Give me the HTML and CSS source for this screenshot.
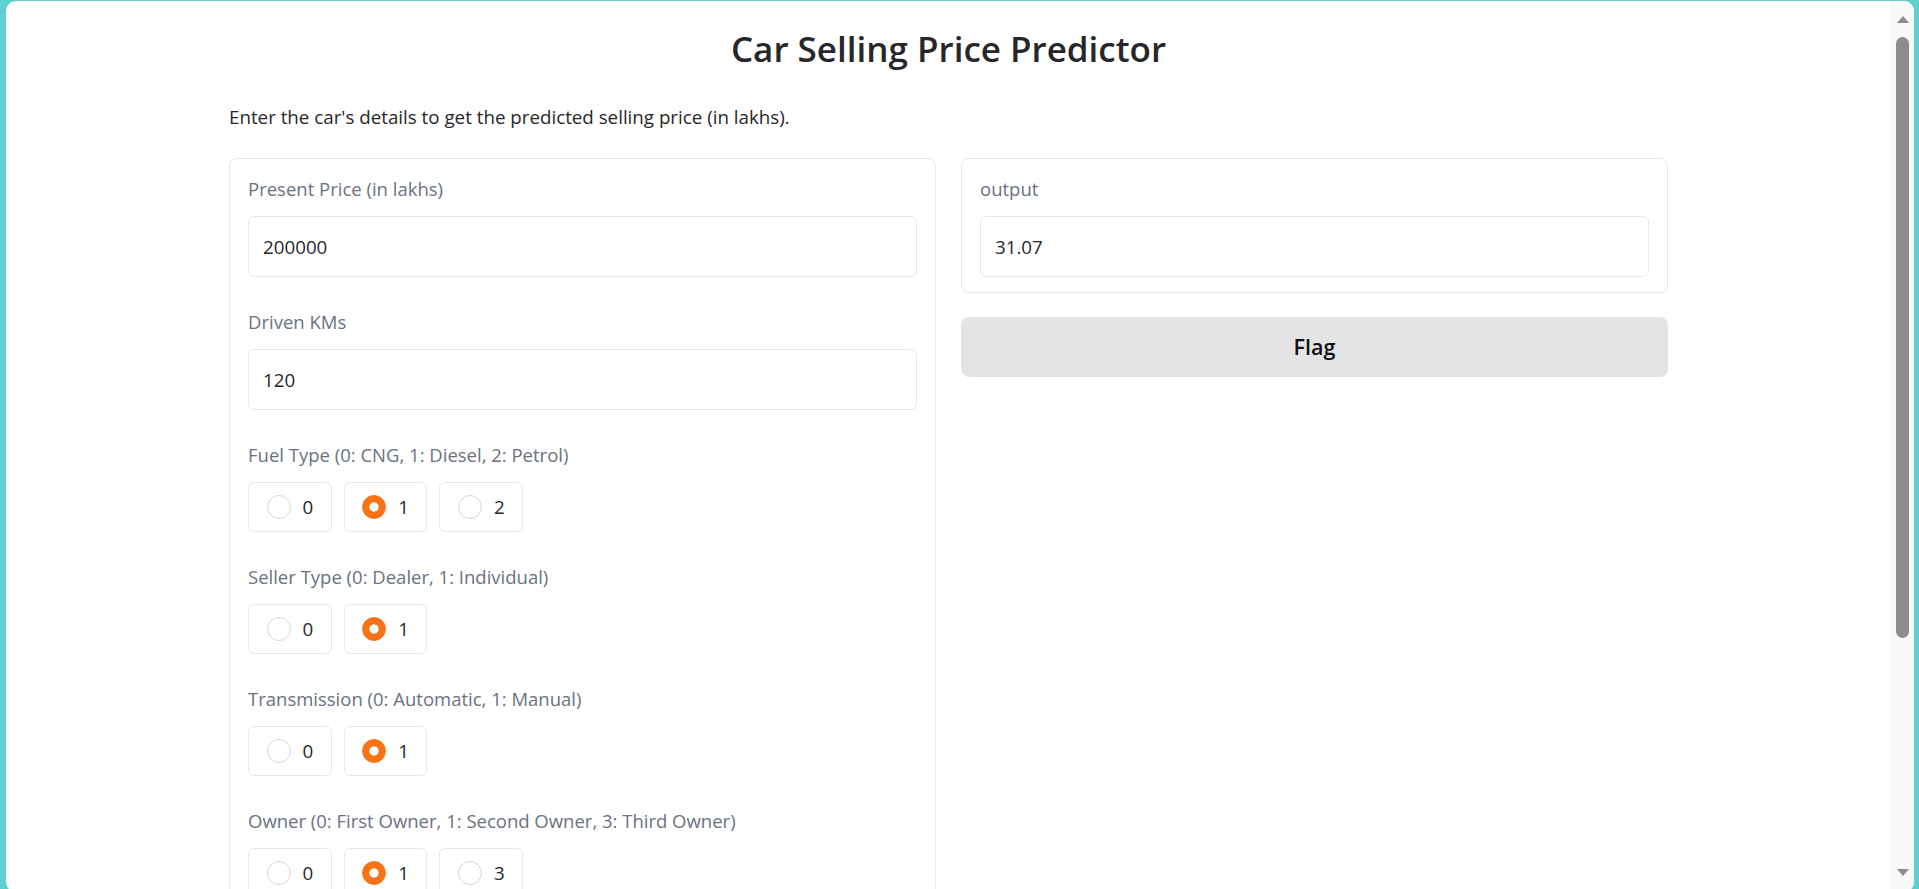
FILE: index.html
```html
<!DOCTYPE html>
<html lang="en">
<head>
<meta charset="utf-8">
<title>Car Selling Price Predictor</title>
<link rel="stylesheet" href="styles.css">
</head>
<body>
<div class="window">
  <main class="main">
    <div class="container">
      <h1 class="title">Car Selling Price Predictor</h1>
      <p class="desc">Enter the car's details to get the predicted selling price (in lakhs).</p>
      <div class="columns">
        <section class="card form">
          <div class="field">
            <label class="label" for="price">Present Price (in lakhs)</label>
            <input class="input" id="price" type="text" value="200000" readonly>
          </div>
          <div class="field">
            <label class="label" for="kms">Driven KMs</label>
            <input class="input" id="kms" type="text" value="120" readonly>
          </div>
          <div class="field">
            <span class="label">Fuel Type (0: CNG, 1: Diesel, 2: Petrol)</span>
            <div class="radios">
              <label class="radio"><input type="radio" name="fuel"><span>0</span></label>
              <label class="radio"><input type="radio" name="fuel" checked><span>1</span></label>
              <label class="radio"><input type="radio" name="fuel"><span>2</span></label>
            </div>
          </div>
          <div class="field">
            <span class="label">Seller Type (0: Dealer, 1: Individual)</span>
            <div class="radios">
              <label class="radio"><input type="radio" name="seller"><span>0</span></label>
              <label class="radio"><input type="radio" name="seller" checked><span>1</span></label>
            </div>
          </div>
          <div class="field">
            <span class="label">Transmission (0: Automatic, 1: Manual)</span>
            <div class="radios">
              <label class="radio"><input type="radio" name="trans"><span>0</span></label>
              <label class="radio"><input type="radio" name="trans" checked><span>1</span></label>
            </div>
          </div>
          <div class="field">
            <span class="label">Owner (0: First Owner, 1: Second Owner, 3: Third Owner)</span>
            <div class="radios">
              <label class="radio"><input type="radio" name="owner"><span>0</span></label>
              <label class="radio"><input type="radio" name="owner" checked><span>1</span></label>
              <label class="radio"><input type="radio" name="owner"><span>3</span></label>
            </div>
          </div>
        </section>
        <div class="right">
          <section class="card output">
            <div class="field">
              <label class="label" for="out">output</label>
              <input class="input" id="out" type="text" value="31.07" readonly>
            </div>
          </section>
          <button class="flag" type="button">Flag</button>
        </div>
      </div>
    </div>
  </main>
  <div class="scrollbar" aria-hidden="true">
    <span class="arrow up"></span>
    <span class="thumb"></span>
    <span class="arrow down"></span>
  </div>
</div>
</body>
</html>
```
FILE: styles.css
```css
* { box-sizing: border-box; }

html, body {
  margin: 0;
  height: 100%;
}

body {
  background: #5fd0d0;
  padding: 1px 5px 0 6px;
  overflow: hidden;
  font-family: "Open Sans", "Noto Sans", sans-serif;
  color: #27272a;
}

.window {
  height: 891px;
  background: #ffffff;
  border-radius: 10px;
  overflow: hidden;
  display: flex;
}

.main {
  flex: 1;
  min-width: 0;
  overflow: hidden;
  padding-top: 24px;
}

.container {
  width: 1439px;
  margin: 0 auto;
}

.title {
  margin: 0;
  text-align: center;
  font-size: 35px;
  line-height: 48px;
  font-weight: 600;
  color: #27272a;
}

.desc {
  margin: 31px 0 0;
  font-size: 18.75px;
  line-height: 26px;
  color: #27272a;
}

.columns {
  margin-top: 28px;
  display: grid;
  grid-template-columns: 707px 707px;
  column-gap: 25px;
  align-items: start;
}

.card {
  border: 1px solid #e5e7eb;
  border-radius: 8px;
  background: #ffffff;
  padding: 16.5px 18px 15px;
}

.form {
  display: flex;
  flex-direction: column;
  gap: 32px;
  padding-bottom: 40px;
}

.field {
  display: flex;
  flex-direction: column;
  gap: 14px;
}

.label {
  font-size: 18.5px;
  line-height: 26px;
  color: #6b7280;
}

.input {
  width: 100%;
  height: 61px;
  border: 1px solid #e5e7eb;
  border-radius: 6px;
  padding: 0 14px;
  font-family: inherit;
  font-size: 18.75px;
  line-height: 26px;
  color: #27272a;
  background: #ffffff;
  outline: none;
}

.radios {
  display: flex;
  gap: 12px;
}

.radio {
  height: 50px;
  display: flex;
  align-items: center;
  gap: 12px;
  padding: 0 17.5px;
  border: 1px solid #e5e7eb;
  border-radius: 6px;
  background: #ffffff;
  font-size: 18.75px;
  line-height: 26px;
  color: #27272a;
}

.radio input {
  appearance: none;
  -webkit-appearance: none;
  margin: 0;
  width: 24px;
  height: 24px;
  border-radius: 50%;
  border: 1px solid #d4d4d8;
  background: #ffffff;
  flex: none;
}

.radio input:checked {
  border-color: #f97316;
  background: radial-gradient(circle, #ffffff 0 4.3px, #f97316 4.9px);
}

.right {
  display: flex;
  flex-direction: column;
  gap: 24px;
}

.flag {
  height: 60px;
  border: none;
  border-radius: 8px;
  background: #e4e4e7;
  font-family: inherit;
  font-size: 21.5px;
  font-weight: 600;
  color: #111111;
}

.scrollbar {
  width: 23px;
  background: #f9f9f9;
  display: flex;
  flex-direction: column;
  align-items: center;
  padding: 15px 0 16px;
}

.arrow {
  width: 0;
  height: 0;
  border-left: 6px solid transparent;
  border-right: 6px solid transparent;
}

.arrow.up {
  border-bottom: 7px solid #8c8c8c;
}

.arrow.down {
  margin-top: auto;
  border-top: 7px solid #8c8c8c;
}

.thumb {
  margin-top: 14px;
  width: 13px;
  height: 601px;
  border-radius: 7px;
  background: #8c8c8c;
}
```
